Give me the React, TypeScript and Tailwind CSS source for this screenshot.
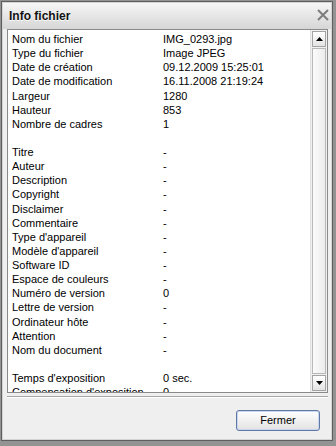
import React from 'react';

type InfoRow = {
  label: string;
  value: string;
};

// null = ligne vide entre les groupes
const rows: readonly (InfoRow | null)[] = [
  { label: 'Nom du fichier', value: 'IMG_0293.jpg' },
  { label: 'Type du fichier', value: 'Image JPEG' },
  { label: 'Date de création', value: '09.12.2009 15:25:01' },
  { label: 'Date de modification', value: '16.11.2008 21:19:24' },
  { label: 'Largeur', value: '1280' },
  { label: 'Hauteur', value: '853' },
  { label: 'Nombre de cadres', value: '1' },
  null,
  { label: 'Titre', value: '-' },
  { label: 'Auteur', value: '-' },
  { label: 'Description', value: '-' },
  { label: 'Copyright', value: '-' },
  { label: 'Disclaimer', value: '-' },
  { label: 'Commentaire', value: '-' },
  { label: "Type d'appareil", value: '-' },
  { label: "Modèle d'appareil", value: '-' },
  { label: 'Software ID', value: '-' },
  { label: 'Espace de couleurs', value: '-' },
  { label: 'Numéro de version', value: '0' },
  { label: 'Lettre de version', value: '-' },
  { label: 'Ordinateur hôte', value: '-' },
  { label: 'Attention', value: '-' },
  { label: 'Nom du document', value: '-' },
  null,
  { label: "Temps d'exposition", value: '0 sec.' },
  { label: "Compensation d'exposition", value: '0' },
];

function Arrow({ up }: { up?: boolean }) {
  return (
    <svg width="7" height="4" viewBox="0 0 7 4" className="block">
      {up ? <polygon points="3.5,0 7,4 0,4" fill="#000" /> : <polygon points="0,0 7,0 3.5,4" fill="#000" />}
    </svg>
  );
}

function ScrollButton({ up }: { up?: boolean }) {
  return (
    <div className="h-[16px] w-full flex items-center justify-center border border-[#a3a3a3] bg-gradient-to-b from-[#ffffff] to-[#e3e3e3]">
      <Arrow up={up} />
    </div>
  );
}

export default function App() {
  return (
    <div
      className="w-[336px] h-[446px] bg-[#939393] pl-[1px] pt-[1px] pr-[3px] pb-[5px] text-black"
      style={{ fontFamily: '"Liberation Sans", Arial, sans-serif' }}
    >
      <div className="h-full border border-[#5e5e5e]">
        <div className="h-full flex flex-col border border-[#d4d4d4] bg-[#efefef]">
          {/* Barre de titre */}
          <div className="h-[26px] shrink-0 flex items-center justify-between pl-[6px] pr-[2px] bg-gradient-to-b from-[#f6f6f6] to-[#d6d6d6]">
            <span className="text-[12px] font-bold text-[#111] [text-shadow:0_1px_0_#ffffff]">Info fichier</span>
            <svg width="12" height="12" viewBox="0 0 12 12" className="mt-[-2px]">
              <path d="M1 1 L11 11 M11 1 L1 11" stroke="#7d7d7d" strokeWidth="2" />
            </svg>
          </div>

          {/* Liste des propriétés */}
          <div className="ml-[4px] mr-[3px] h-[364px] shrink-0 flex border border-[#8a8a8a] bg-white">
            <div className="flex-1 overflow-hidden pl-[4px] pt-[2px] text-[11px] leading-[14.13px]">
              {rows.map((row, i) =>
                row ? (
                  <div key={i} className="grid grid-cols-[151px_1fr] whitespace-nowrap">
                    <span>{row.label}</span>
                    <span>{row.value}</span>
                  </div>
                ) : (
                  <div key={i} className="h-[14.13px]" />
                ),
              )}
            </div>
            <div className="w-[17px] shrink-0 flex flex-col bg-[#f0f0f0] border-l border-[#e0e0e0] p-[1px] gap-[1px]">
              <ScrollButton up />
              <div className="flex-1 border border-[#b8b8b8] bg-gradient-to-r from-[#fbfbfb] to-[#ececec]" />
              <ScrollButton />
            </div>
          </div>

          {/* Séparateur */}
          <div className="ml-[4px] mr-[3px] mt-[3px] border-t border-[#a5a5a5] border-b border-b-white" />

          {/* Bouton */}
          <div className="flex justify-end pr-[11px] pt-[12px]">
            <button
              type="button"
              className="w-[84px] h-[21px] rounded-[3px] border border-[#5f78a6] bg-gradient-to-b from-[#ffffff] to-[#e2e2e2] text-[11px] shadow-[inset_0_0_0_1px_#c9d6ee]"
            >
              Fermer
            </button>
          </div>
        </div>
      </div>
    </div>
  );
}
